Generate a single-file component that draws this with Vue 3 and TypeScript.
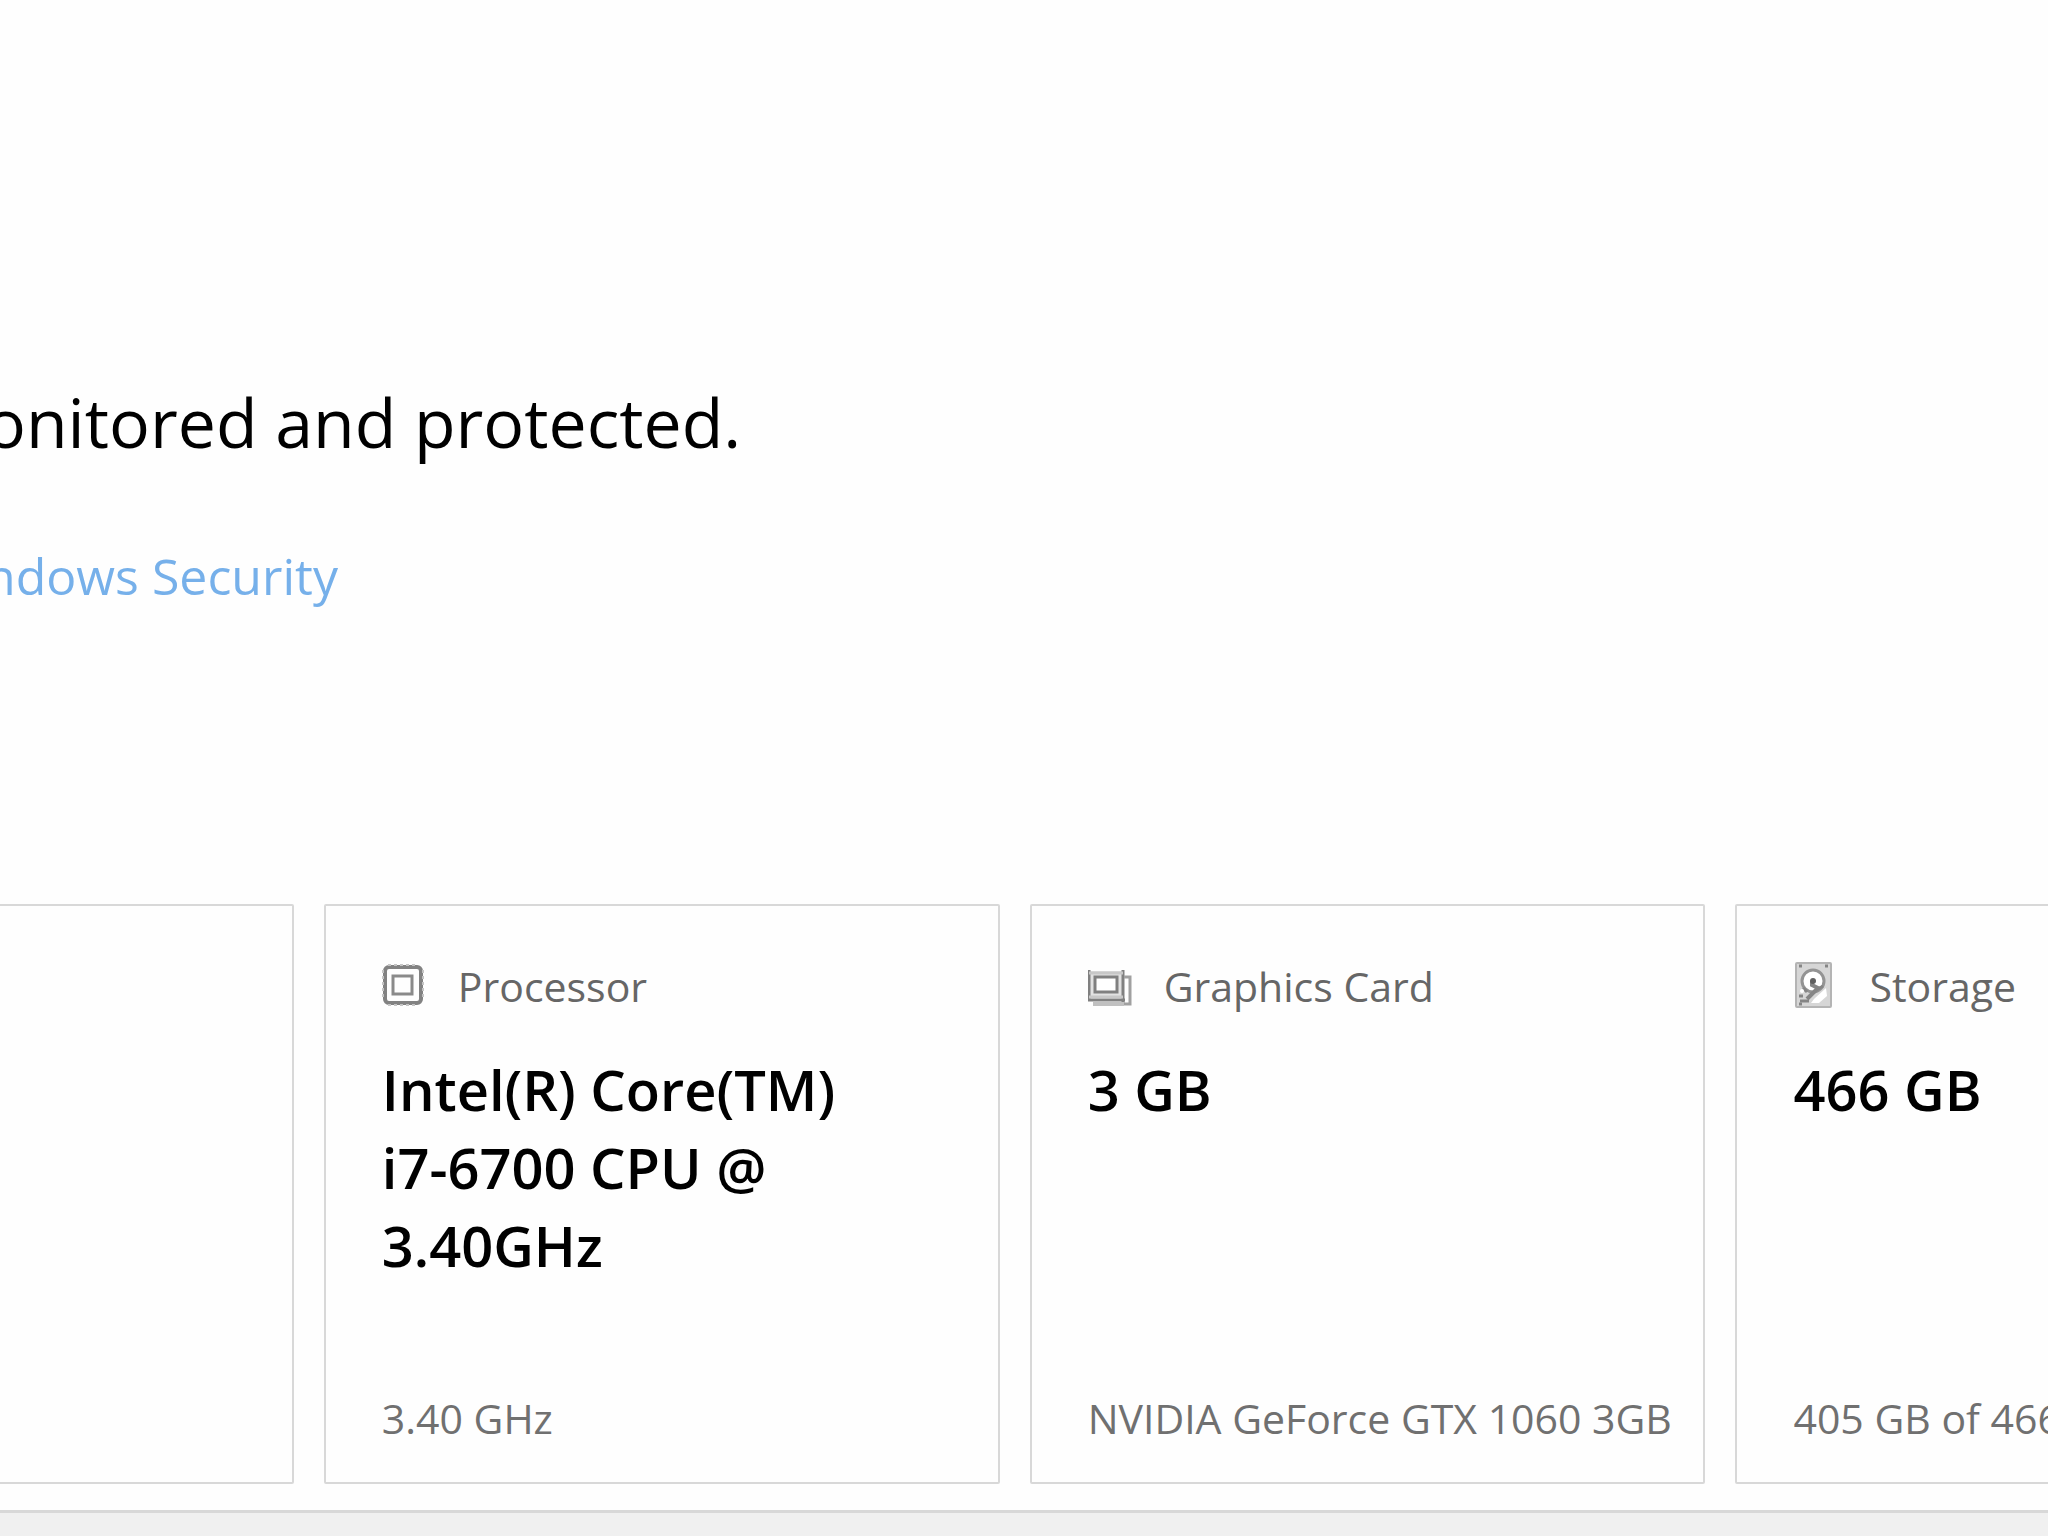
<script setup lang="ts">
interface DeviceCard {
  kind: 'none' | 'processor' | 'graphics' | 'storage'
  label: string
  value: string
  detail: string
}

const cards: DeviceCard[] = [
  { kind: 'none', label: '', value: '', detail: '' },
  { kind: 'processor', label: 'Processor', value: 'Intel(R) Core(TM) i7-6700 CPU @ 3.40GHz', detail: '3.40 GHz' },
  { kind: 'graphics', label: 'Graphics Card', value: '3 GB', detail: 'NVIDIA GeForce GTX 1060 3GB' },
  { kind: 'storage', label: 'Storage', value: '466 GB', detail: '405 GB of 466' },
]
</script>

<template>
  <main class="about">
    <section class="status">
      <h1>onitored and protected.</h1>
      <a href="#security">ndows Security</a>
    </section>

    <section class="cards">
      <article v-for="card in cards" :key="card.kind" class="card">
        <template v-if="card.kind !== 'none'">
          <header class="card-head">
            <svg v-if="card.kind === 'processor'" class="icon" viewBox="0 0 48 48" aria-hidden="true">
              <rect x="3" y="5" width="36" height="36" rx="4" fill="none" stroke="#828282" stroke-width="4" />
              <path d="M6 3H36M6 43H36M1 8V38M41 8V38" fill="none" stroke="#c4c4c4" stroke-width="2" stroke-dasharray="3 3" />
              <rect x="11" y="14" width="19" height="18" fill="none" stroke="#8a8a8a" stroke-width="3" />
            </svg>
            <svg v-else-if="card.kind === 'graphics'" class="icon" viewBox="0 0 48 48" aria-hidden="true">
              <path d="M0 9H35V39H0Z" fill="#e2e2e2" />
              <path d="M1 8V39M0 38H37M35 8V41" fill="none" stroke="#808080" stroke-width="3" />
              <path d="M1 11H35M1 35H35" fill="none" stroke="#c8c8c8" stroke-width="3" />
              <rect x="7" y="15" width="22" height="15" fill="#fff" stroke="#808080" stroke-width="3" />
              <path d="M36 15H42V42H36" fill="none" stroke="#a0a0a0" stroke-width="3" />
              <path d="M5 42H36" stroke="#c0c0c0" stroke-width="4" />
            </svg>
            <svg v-else class="icon" viewBox="0 0 48 48" aria-hidden="true">
              <rect x="3" y="1" width="35" height="44" rx="1" fill="#d6d6d6" stroke="#b4b4b4" stroke-width="2" />
              <circle cx="20" cy="19" r="11" fill="#fff" stroke="#939393" stroke-width="3" />
              <path d="M21 37L33 26L34 34L26 41H18Z" fill="#fff" />
              <path d="M19 19V23L25 26L14 37" fill="none" stroke="#858585" stroke-width="4" />
              <path d="M25 27L30 24M7 39H16M10 26L14 30" fill="none" stroke="#858585" stroke-width="3" />
              <circle cx="20" cy="19" r="3" fill="#606060" />
              <path d="M6 4H9M6 42H9M32 4H35M6 34H10" stroke="#858585" stroke-width="3" />
              <circle cx="9" cy="29" r="2" fill="#fff" />
            </svg>
            <span>{{ card.label }}</span>
          </header>
          <h2>{{ card.value }}</h2>
          <p>{{ card.detail }}</p>
        </template>
      </article>
    </section>

    <footer class="bar"></footer>
  </main>
</template>

<style>
body {
  background: #fefefe;
  overflow: hidden;
}
</style>

<style scoped>
.about {
  display: flex;
  flex-direction: column;
  min-height: 100vh;
  overflow: hidden;
  color: #000;
  font-family: "Open Sans", "Noto Sans", sans-serif;
}

.status {
  display: flex;
  flex-direction: column;
  align-items: flex-start;
  gap: 70px;
  height: 904px;
  box-sizing: border-box;
  padding-top: 374px;
  margin-left: -15px;
  white-space: nowrap;
}

h1 {
  margin: 0;
  font-size: 68px;
  font-weight: 400;
  line-height: 96px;
}

a {
  color: #76b0ea;
  font-size: 50px;
  line-height: 72px;
  text-decoration: none;
}

.cards {
  display: grid;
  grid-auto-flow: column;
  grid-auto-columns: 33vw;
  gap: 30px;
  margin-left: -382px;
}

.card {
  display: flex;
  flex-direction: column;
  min-height: 580px;
  box-sizing: border-box;
  padding: 48px 24px 36px 56px;
  border: 2px solid #d8d8d8;
  border-radius: 2px;
}

.card-head {
  display: flex;
  align-items: center;
  gap: 28px;
  height: 64px;
  color: #666;
  font-size: 41px;
  line-height: 64px;
  white-space: nowrap;
}

.icon {
  flex: none;
  width: 48px;
  height: 48px;
}

h2 {
  max-width: 480px;
  margin: 32px 0 0;
  font-size: 56px;
  font-weight: 600;
  line-height: 78px;
}

p {
  margin: auto 0 0;
  color: #707070;
  font-size: 41px;
  line-height: 56px;
  white-space: nowrap;
}

.bar {
  flex: 1;
  margin-top: 26px;
  background: #f0f0f0;
  border-top: 3px solid #d8d8d8;
}
</style>
